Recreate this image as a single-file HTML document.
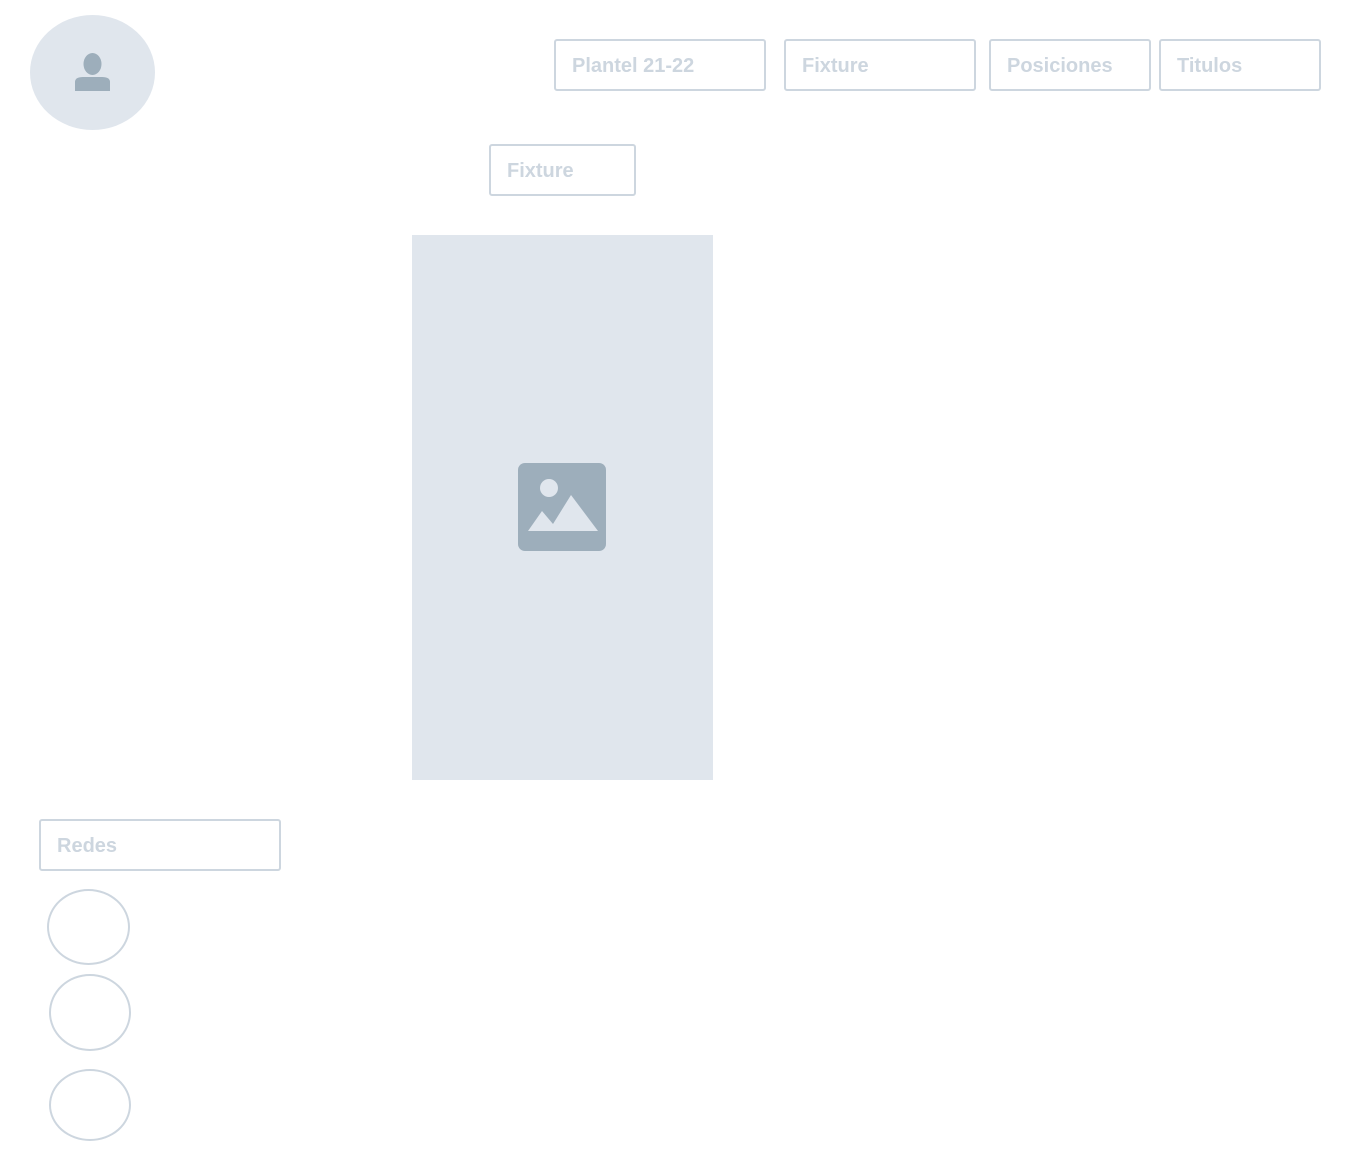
<!DOCTYPE html>
<html><head><meta charset="utf-8"><style>
html,body{margin:0;padding:0;background:#fff;width:1350px;height:1155px;overflow:hidden;position:relative}
.b{position:absolute;box-sizing:border-box;border:2px solid #cdd6df;border-radius:3px;font-family:"Liberation Sans",sans-serif;font-size:20px;font-weight:bold;color:#cdd6df;padding-left:16px;line-height:50px}
.c{position:absolute;box-sizing:border-box;border:2px solid #cdd6df;border-radius:50%}
</style></head><body>
<div style="position:absolute;left:30px;top:15px;width:125px;height:115px;border-radius:50%;background:#e0e6ed"></div>
<svg style="position:absolute;left:74px;top:52px" width="38" height="40" viewBox="0 0 38 40">
<ellipse cx="18.5" cy="12" rx="9" ry="11" fill="#9daebb"/>
<path d="M1 39 V30 Q1 25 9 25 H28 Q36 25 36 30 V39 Z" fill="#9daebb"/>
</svg>
<div class="b" style="left:554px;top:39px;width:212px;height:52px">Plantel 21-22</div>
<div class="b" style="left:784px;top:39px;width:192px;height:52px">Fixture</div>
<div class="b" style="left:989px;top:39px;width:162px;height:52px">Posiciones</div>
<div class="b" style="left:1159px;top:39px;width:162px;height:52px">Titulos</div>
<div class="b" style="left:489px;top:144px;width:147px;height:52px">Fixture</div>
<div style="position:absolute;left:412px;top:235px;width:301px;height:545px;background:#e0e6ed"></div>
<svg style="position:absolute;left:518px;top:463px" width="89" height="89" viewBox="0 0 89 89">
<rect x="0" y="0" width="88" height="88" rx="7" fill="#9daebb"/>
<circle cx="31" cy="25" r="9" fill="#e0e6ed"/>
<path d="M10 68 L24 48 L35 61 L53 32 L80 68 Z" fill="#e0e6ed"/>
</svg>
<div class="b" style="left:39px;top:819px;width:242px;height:52px">Redes</div>
<div class="c" style="left:47px;top:889px;width:83px;height:76px"></div>
<div class="c" style="left:49px;top:974px;width:82px;height:77px"></div>
<div class="c" style="left:49px;top:1069px;width:82px;height:72px"></div>
</body></html>
